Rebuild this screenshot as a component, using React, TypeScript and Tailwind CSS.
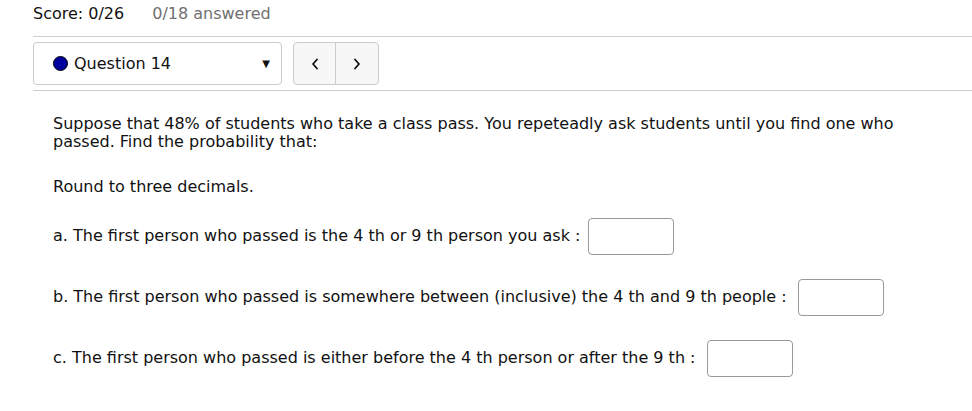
import React from "react";

const font = { fontFamily: "'DejaVu Sans', sans-serif" };

function Box({ ml }: { ml: string }) {
  return <span className={`inline-block align-middle w-[86px] h-[37px] border border-[#999] rounded-[4px] bg-white ${ml}`} />;
}

function Chevron({ left }: { left?: boolean }) {
  return (
    <svg width="8" height="12" viewBox="0 0 8 12" fill="none" stroke="#111" strokeWidth="1.8" strokeLinecap="round" strokeLinejoin="round">
      {left ? <path d="M6 1.5 L2 6 L6 10.5" /> : <path d="M2 1.5 L6 6 L2 10.5" />}
    </svg>
  );
}

export default function App() {
  return (
    <div className="w-[972px] h-[411px] bg-white text-[#111] text-[16px] overflow-hidden" style={font}>
      <div className="pl-[33px]">
        <div className="flex h-[27px] items-center gap-[28px]">
          <span>Score: 0/26</span>
          <span className="text-[#707070]">0/18 answered</span>
        </div>
        <div className="border-t border-b border-[#cfcfcf] mt-[9px] h-[55px] flex items-center gap-[11px]">
          <div className="w-[249px] h-[43px] border border-[#ccc] rounded-[4px] flex items-center pl-[19px] pr-[11px]">
            <span className="w-[15px] h-[15px] rounded-full bg-[#00009e] border border-black" />
            <span className="ml-[6px]">Question 14</span>
            <span className="ml-auto text-[10px]">▼</span>
          </div>
          <div className="flex h-[43px] border border-[#ccc] rounded-[4px] bg-[#f7f7f7]">
            <div className="w-[42px] flex items-center justify-center border-r border-[#ccc]"><Chevron left /></div>
            <div className="w-[42px] flex items-center justify-center"><Chevron /></div>
          </div>
        </div>
        <div className="pl-[20px] pt-[24px] leading-[18px] w-[870px]">
          <p>Suppose that 48% of students who take a class pass. You repeteadly ask students until you find one who passed. Find the probability that:</p>
          <p className="mt-[27px]">Round to three decimals.</p>
          <p className="mt-[22px]">a. The first person who passed is the 4 th or 9 th person you ask : <Box ml="ml-[2px]" /></p>
          <p className="mt-[24px]">b. The first person who passed is somewhere between (inclusive) the 4 th and 9 th people : <Box ml="ml-[6px]" /></p>
          <p className="mt-[24px]">c. The first person who passed is either before the 4 th person or after the 9 th :<Box ml="ml-[11px]" /></p>
        </div>
      </div>
    </div>
  );
}
